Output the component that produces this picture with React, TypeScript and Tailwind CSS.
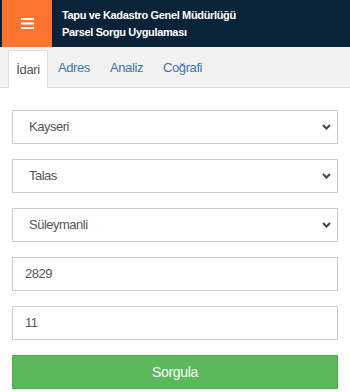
import React from 'react';

const Chevron: React.FC = () => (
    <svg width="9" height="6" viewBox="0 0 9 6" className="absolute right-[6px] top-1/2 -translate-y-1/2">
        <path d="M1 1 L4.5 4.5 L8 1" fill="none" stroke="#444" strokeWidth="2" />
    </svg>
);

const SelectBox: React.FC<{ value: string }> = ({ value }) => (
    <div className="relative h-[34px] border border-[#cccccc] bg-white flex items-center pl-[16px] text-[13px] tracking-[-0.5px] text-[#555]">
        {value}
        <Chevron />
    </div>
);

const InputBox: React.FC<{ value: string }> = ({ value }) => (
    <div className="h-[34px] border border-[#cccccc] bg-white flex items-center pl-[12px] text-[13px] tracking-[-0.5px] text-[#555]">
        {value}
    </div>
);

export default function App() {
    const tabs = ['Adres', 'Analiz', 'Coğrafi'];
    return (
        <div className="w-[350px] h-[392px] bg-white overflow-hidden" style={{ fontFamily: '"Liberation Sans", Arial, sans-serif' }}>
            <div className="h-[47px] flex bg-[#0b2339]">
                <div className="w-[50px] ml-[2px] bg-[#fd7431] flex items-center justify-center">
                    <svg width="13" height="11" viewBox="0 0 13 11">
                        <rect x="0" y="0" width="13" height="2" fill="#fff" />
                        <rect x="0" y="4.5" width="13" height="2" fill="#fff" />
                        <rect x="0" y="9" width="13" height="2" fill="#fff" />
                    </svg>
                </div>
                <div className="flex flex-col justify-center pl-[10px] text-white font-bold text-[11px] tracking-[-0.35px] leading-[17px]">
                    <div>Tapu ve Kadastro Genel Müdürlüğü</div>
                    <div>Parsel Sorgu Uygulaması</div>
                </div>
            </div>
            <div className="h-[41px] bg-[#f2f2f2] border-b border-[#dddddd] flex items-end pl-[8px]">
                <div className="h-[38px] w-[40px] bg-white border-x border-t border-[#dddddd] -mb-px flex items-center justify-center text-[13px] tracking-[-0.4px] text-[#555]">
                    İdari
                </div>
                {tabs.map((t) => (
                    <div key={t} className="h-[38px] px-[10px] flex items-center text-[13px] tracking-[-0.4px] text-[#3d74b0]">
                        {t}
                    </div>
                ))}
            </div>
            <div className="px-[12px] pt-[22px] flex flex-col gap-[15px]">
                <SelectBox value="Kayseri" />
                <SelectBox value="Talas" />
                <SelectBox value="Süleymanli" />
                <InputBox value="2829" />
                <InputBox value="11" />
                <div className="h-[34px] bg-[#5cb85c] border border-[#4cae4c] flex items-center justify-center text-white text-[14px] tracking-[-0.3px]">
                    Sorgula
                </div>
            </div>
        </div>
    );
}
